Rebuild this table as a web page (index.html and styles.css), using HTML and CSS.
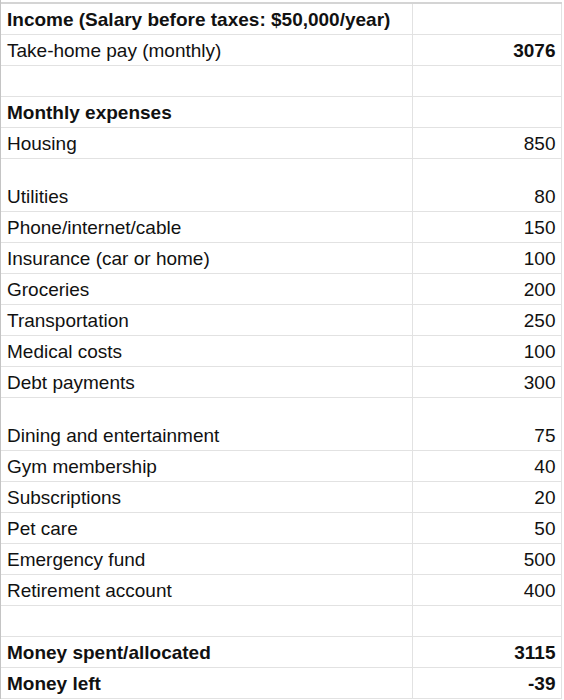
FILE: index.html
```html
<!DOCTYPE html>
<html lang="en">
<head>
    <meta charset="UTF-8" />
    <title>Monthly Budget</title>
    <link rel="stylesheet" href="styles.css">
</head>
<body>

    <div class="sheet">
        <table class="budget">
            <tr class="bold">
                <td>Income (Salary before taxes: $50,000/year)</td>
                <td class="num"></td>
            </tr>
            <tr>
                <td>Take-home pay (monthly)</td>
                <td class="num bold">3076</td>
            </tr>
            <tr>
                <td></td>
                <td class="num"></td>
            </tr>
            <tr class="bold">
                <td>Monthly expenses</td>
                <td class="num"></td>
            </tr>
            <tr><td>Housing</td><td class="num">850</td></tr>
            <tr class="tall"><td>Utilities</td><td class="num">80</td></tr>
            <tr><td>Phone/internet/cable</td><td class="num">150</td></tr>
            <tr><td>Insurance (car or home)</td><td class="num">100</td></tr>
            <tr><td>Groceries</td><td class="num">200</td></tr>
            <tr><td>Transportation</td><td class="num">250</td></tr>
            <tr><td>Medical costs</td><td class="num">100</td></tr>
            <tr><td>Debt payments</td><td class="num">300</td></tr>
            <tr class="tall"><td>Dining and entertainment</td><td class="num">75</td></tr>
            <tr><td>Gym membership</td><td class="num">40</td></tr>
            <tr><td>Subscriptions</td><td class="num">20</td></tr>
            <tr><td>Pet care</td><td class="num">50</td></tr>
            <tr><td>Emergency fund</td><td class="num">500</td></tr>
            <tr><td>Retirement account</td><td class="num">400</td></tr>
            <tr><td></td><td class="num"></td></tr>
            <tr class="bold"><td>Money spent/allocated</td><td class="num">3115</td></tr>
            <tr class="bold"><td>Money left</td><td class="num">-39</td></tr>
        </table>
    </div>

</body>
</html>
```

FILE: styles.css
```css
body {
    margin: 0;
    background: white;
    font-family: "Liberation Sans", Arial, sans-serif;
    font-size: 19px;
    color: #111;
}

.sheet {
    padding-top: 2px;
    border-left: 1px solid #c4c4c4;
    width: 560px;
}

.budget {
    border-collapse: collapse;
    table-layout: fixed;
    width: 560px;
    border-top: 2px solid #d4d4d4;
}

    .budget td {
        height: 31px;
        padding: 0 5px 4px 6px;
        line-height: 20px;
        vertical-align: bottom;
        border-bottom: 1px solid #e2e2e2;
        white-space: nowrap;
        overflow: visible;
        box-sizing: border-box;
    }

    .budget td:first-child {
        width: 411px;
    }

    .budget td.num {
        width: 149px;
        text-align: right;
        border-left: 1px solid #e2e2e2;
        border-right: 1px solid #e2e2e2;
    }

.budget tr.tall td {
    height: 53px;
}

.bold td, td.bold {
    font-weight: bold;
}
```
